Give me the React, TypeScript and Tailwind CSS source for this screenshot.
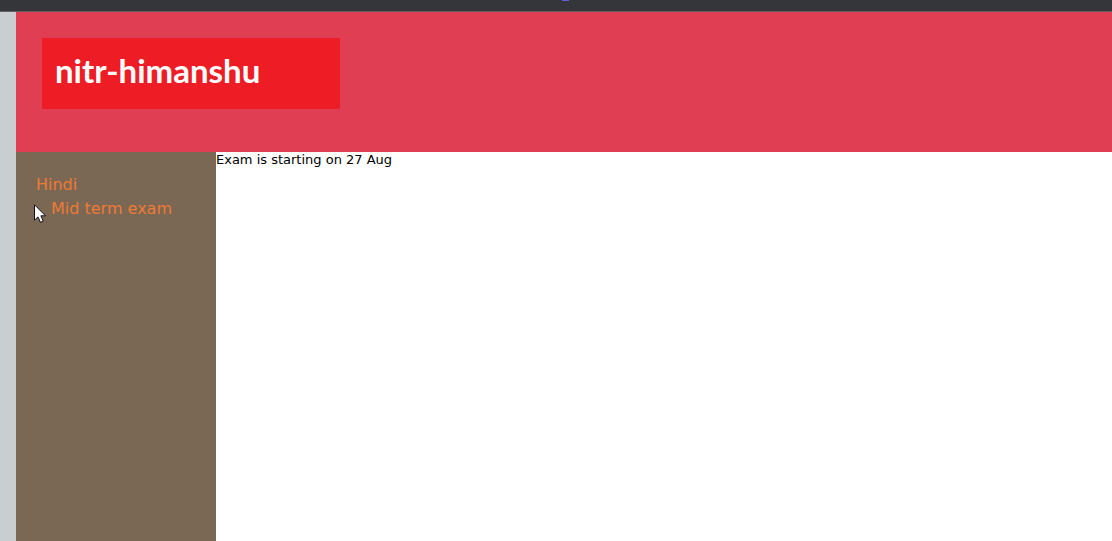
function Cursor() {
  return (
    <svg
      className="pointer-events-none absolute top-[52px] left-[18px]"
      width="12"
      height="19"
      viewBox="0 0 12 19"
      aria-hidden="true"
    >
      <path
        d="M0.5 0.8V16.2L4 12.9L6.4 18.3L9.2 17.1L6.9 11.8H11.5Z"
        fill="#ffffff"
        stroke="#10101c"
        strokeWidth="1"
      />
    </svg>
  );
}

export default function App() {
  return (
    <div className="flex min-h-screen flex-col bg-[#c9ced1] font-['Verdana','DejaVu_Sans',sans-serif]">
      <div className="flex h-3 justify-center overflow-hidden border-b border-[#5f6063] bg-[#35363a] pl-[18px]">
        <span className="h-px w-[7px] bg-[#5b5fe0]" />
      </div>
      <div className="ml-4 flex grow flex-col bg-white">
        <header className="h-[140px] bg-[#e03f53] px-[26px] pt-[26px]">
          <div className="flex h-[71px] w-[298px] items-center bg-[#ee1c25] px-[13px] pb-2">
            <h1 className="font-['Lato',sans-serif] text-[33px] leading-10 font-bold text-white">
              nitr-himanshu
            </h1>
          </div>
        </header>
        <div className="flex grow">
          <nav className="relative w-[200px] shrink-0 bg-[#7b6854] px-5 pt-[21px] text-base leading-6 text-[#ee7a35]">
            <ul>
              <li>
                <a href="#hindi">Hindi</a>
                <ul className="pl-[15px]">
                  <li>
                    <a href="#mid-term-exam">Mid term exam</a>
                  </li>
                </ul>
              </li>
            </ul>
            <Cursor />
          </nav>
          <main className="grow text-[13px] leading-4 text-black">
            <p>Exam is starting on 27 Aug</p>
          </main>
        </div>
      </div>
    </div>
  );
}
